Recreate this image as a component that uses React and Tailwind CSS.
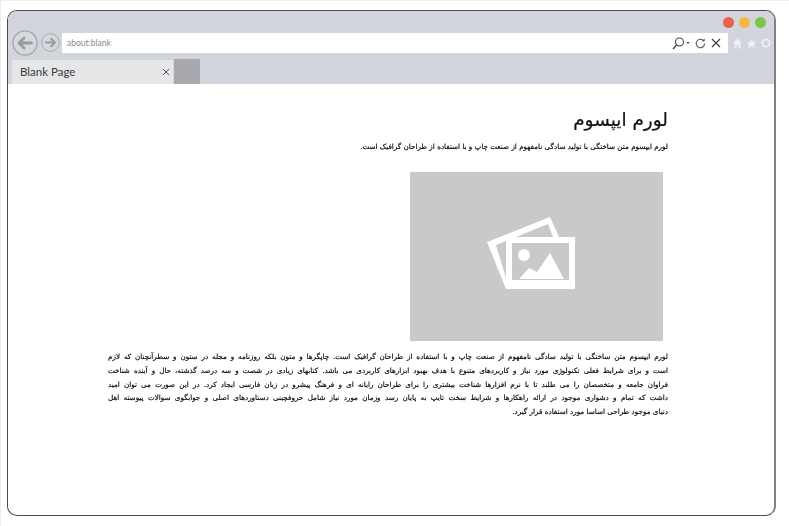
const lines = [
  "لورم ایپسوم متن ساختگی با تولید سادگی نامفهوم از صنعت چاپ و با استفاده از طراحان گرافیک است. چاپگرها و متون بلکه روزنامه و مجله در ستون و سطرآنچنان که لازم",
  "است و برای شرایط فعلی تکنولوژی مورد نیاز و کاربردهای متنوع با هدف بهبود ابزارهای کاربردی می باشد. کتابهای زیادی در شصت و سه درصد گذشته، حال و آینده شناخت",
  "فراوان جامعه و متخصصان را می طلبد تا با نرم افزارها شناخت بیشتری را برای طراحان رایانه ای و فرهنگ پیشرو در زبان فارسی ایجاد کرد. در این صورت می توان امید",
  "داشت که تمام و دشواری موجود در ارائه راهکارها و شرایط سخت تایپ به پایان رسد وزمان مورد نیاز شامل حروفچینی دستاوردهای اصلی و جوابگوی سوالات پیوسته اهل",
];

function Arrow({ size, stroke }) {
  return (
    <svg width={size} height={size} viewBox="0 0 28 28" fill="none">
      <circle cx="14" cy="14" r="13" fill="#d5d9de" stroke="#a3a7ac" strokeWidth="1.4" />
      <path d={stroke} stroke="#989ca1" strokeWidth="3" strokeLinecap="round" strokeLinejoin="round" />
    </svg>
  );
}

export default function App() {
  return (
    <div className="w-[789px] h-[526px] bg-white pt-[9px] pl-[6px] overflow-hidden border-t border-l border-[#eeeeee]" style={{ fontFamily: "'DejaVu Sans', sans-serif" }}>
      <div className="w-[769px] h-[506px] rounded-[10px] border border-[#4a4a4a] border-r-2 border-r-[#808080] overflow-hidden flex flex-col bg-white">
        <div className="h-[73px] bg-[#d2d6dc] flex flex-col shrink-0">
          <div className="h-[22px] flex items-start justify-end gap-[5px] pt-[6px] pr-[8px]">
            <span className="w-[11px] h-[11px] rounded-full bg-[#ec5f50]" />
            <span className="w-[11px] h-[11px] rounded-full bg-[#f8b640]" />
            <span className="w-[11px] h-[11px] rounded-full bg-[#7cc54a]" />
          </div>
          <div className="h-[20px] flex items-center pl-[4px]">
            <div className="flex items-center gap-[3px] w-[50px] shrink-0 -mt-[1px]">
              <Arrow size={26} stroke="M21 14H8M13 8.5L7.5 14L13 19.5" />
              <Arrow size={19} stroke="M7 14H20M15 8.5L20.5 14L15 19.5" />
            </div>
            <div className="w-[666px] h-[20px] bg-white flex items-center justify-between pl-[5px] pr-[7px] shrink-0">
              <span className="text-[8.5px] text-[#8a8a8a]" style={{ fontFamily: "Lato, sans-serif" }}>about:blank</span>
              <div className="flex items-center gap-[5px]">
                <svg width="18" height="13" viewBox="0 0 18 13" fill="none">
                  <circle cx="7.5" cy="5" r="4" stroke="#444" strokeWidth="1.1" />
                  <path d="M4.6 8L1 12" stroke="#444" strokeWidth="1.3" />
                  <path d="M14.4 5h3.2l-1.6 2z" fill="#444" />
                </svg>
                <svg width="11" height="11" viewBox="0 0 11 11" fill="none">
                  <path d="M8.8 3A4.2 4.2 0 1 0 9.6 5.6" stroke="#555" strokeWidth="1.1" />
                  <path d="M6.7 3.3h3V0.6z" fill="#555" />
                </svg>
                <svg width="10" height="10" viewBox="0 0 10 10" fill="none">
                  <path d="M1 1L9 9M9 1L1 9" stroke="#444" strokeWidth="1.3" />
                </svg>
              </div>
            </div>
            <div className="flex items-center gap-[4px] pl-[5px]">
              <svg width="9" height="11" viewBox="0 0 9 11"><path d="M4.5 0.5L9 5H7.6V10.5H5.4V7H3.6V10.5H1.4V5H0z" fill="#eef0f2" /></svg>
              <svg width="11" height="11" viewBox="0 0 24 24"><path d="M12 1.5l3.2 7 7.5.8-5.6 5.1 1.6 7.6L12 18.2 5.3 22l1.6-7.6L1.3 9.3l7.5-.8z" fill="#eef0f2" /></svg>
              <svg width="10" height="10" viewBox="0 0 10 10" fill="none"><circle cx="5" cy="5" r="3.7" stroke="#eef0f2" strokeWidth="1.8" /></svg>
            </div>
          </div>
          <div className="flex items-end pl-[4px] mt-auto">
            <div className="w-[161px] h-[24px] bg-[#e4e6e8] flex items-center justify-between pl-[8px] pr-[3px]">
              <span className="text-[11.5px] text-[#3c3c3c]" style={{ fontFamily: "Lato, sans-serif" }}>Blank Page</span>
              <svg width="8" height="8" viewBox="0 0 8 8" fill="none"><path d="M1 1L7 7M7 1L1 7" stroke="#555" strokeWidth="1" /></svg>
            </div>
            <div className="w-[26px] h-[25px] ml-[1px] bg-[#a7a9ae]" />
          </div>
        </div>
        <div dir="rtl" className="pr-[106px] pl-[100px] pt-[23px] text-black [will-change:transform]">
          <h1 className="text-[18.5px] leading-[26px] text-[#111] [-webkit-text-stroke:0.2px_#111]">لورم ایپسوم</h1>
          <p className="text-[7.2px] leading-[14px] mt-[7px] [-webkit-text-stroke:0.15px_#000]">لورم ایپسوم متن ساختگی با تولید سادگی نامفهوم از صنعت چاپ و با استفاده از طراحان گرافیک است.</p>
          <div className="w-[253px] h-[169px] bg-[#c9c9c9] mr-[5px] mt-[18px]">
            <svg className="w-full h-full block" viewBox="0 0 253 169">
              <polygon points="77,70 140,45 149,65 150,117 96,117" fill="#fff" />
              <polygon points="86,73 138,52 143,65 150,100 96,106" fill="#c9c9c9" />
              <rect x="96" y="65" width="69" height="52" fill="#fff" />
              <rect x="102" y="71" width="57" height="37" fill="#c9c9c9" />
              <circle cx="114" cy="83" r="6" fill="#fff" />
              <polygon points="109,107 119,96 127,100 140,81 154,107" fill="#fff" />
            </svg>
          </div>
          <div className="text-[7.2px] leading-[13.75px] mt-[9px] [-webkit-text-stroke:0.15px_#000]">
            {lines.map((l) => (
              <div key={l} className="[text-align-last:justify] whitespace-nowrap">{l}</div>
            ))}
            <div>دنیای موجود طراحی اساسا مورد استفاده قرار گیرد.</div>
          </div>
        </div>
      </div>
    </div>
  );
}
